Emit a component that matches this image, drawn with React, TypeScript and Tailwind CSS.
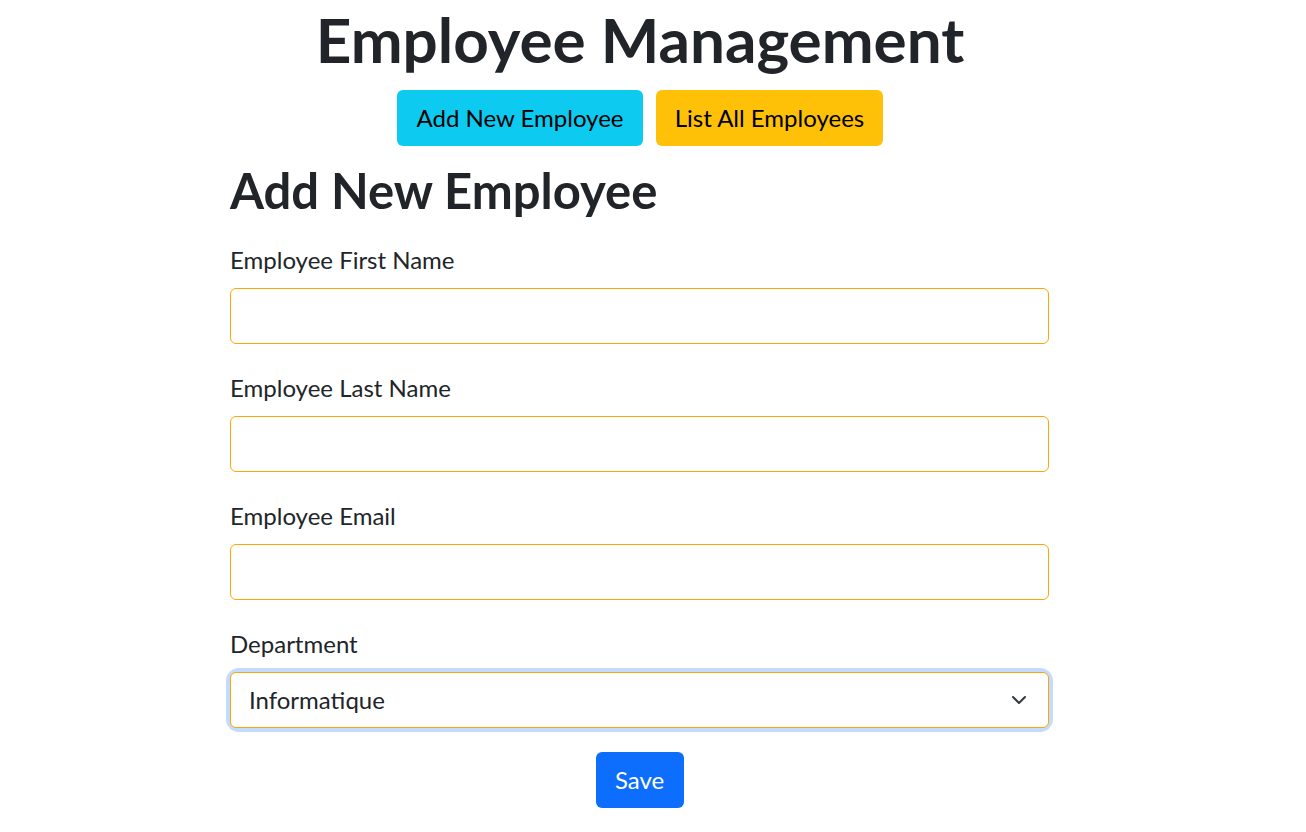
const fields = [
  { label: 'Employee First Name', type: 'text' },
  { label: 'Employee Last Name', type: 'text' },
  { label: 'Employee Email', type: 'email' },
]

const App = () => {
  return (
    <div className="w-[1280px] bg-white text-[#212529] font-['Lato',sans-serif]">
      {/* Header */}
      <h1 className="text-center text-[62px] leading-[78px] font-bold pt-0">
        Employee Management
      </h1>
      <div className="flex justify-center gap-[13px] mt-[12px]">
        <button className="h-[56px] w-[246px] rounded-[6px] bg-[#0dcaf0] text-black text-[24px]">
          Add New Employee
        </button>
        <button className="h-[56px] w-[227px] rounded-[6px] bg-[#ffc107] text-black text-[24px]">
          List All Employees
        </button>
      </div>

      {/* Form */}
      <div className="w-[819px] ml-[230px] mt-[15px]">
        <h2 className="text-[49px] leading-[58px] font-bold">Add New Employee</h2>
        <form className="mt-[26px]">
          {fields.map((field, index) => (
            <div key={index} className="mb-[29px]">
              <label className="block text-[24px] leading-[30px] mb-[13px]">{field.label}</label>
              <input
                type={field.type}
                className="block w-full h-[56px] rounded-[6px] border border-[#ffa500] px-[18px] text-[24px] outline-none"
              />
            </div>
          ))}
          <div>
            <label className="block text-[24px] leading-[30px] mb-[13px]">Department</label>
            <div className="relative rounded-[9px] ring-4 ring-[#c2dbfe]">
              <select
                defaultValue="Informatique"
                className="block w-full h-[56px] appearance-none rounded-[6px] border border-[#ffa500] bg-white pl-[18px] text-[24px] outline-none"
              >
                <option>Informatique</option>
                <option>Finance</option>
                <option>Ressources Humaines</option>
              </select>
              <svg
                className="pointer-events-none absolute right-[22px] top-[22px]"
                width="16"
                height="12"
                viewBox="0 0 16 12"
                fill="none"
              >
                <path d="m2 3 6 6 6-6" stroke="#343a40" strokeWidth="2" strokeLinecap="round" strokeLinejoin="round" />
              </svg>
            </div>
          </div>
          <div className="flex justify-center mt-[24px]">
            <button type="button" className="h-[56px] w-[88px] rounded-[6px] bg-[#0d6efd] text-white text-[24px]">
              Save
            </button>
          </div>
        </form>
      </div>
    </div>
  )
}

export default App
